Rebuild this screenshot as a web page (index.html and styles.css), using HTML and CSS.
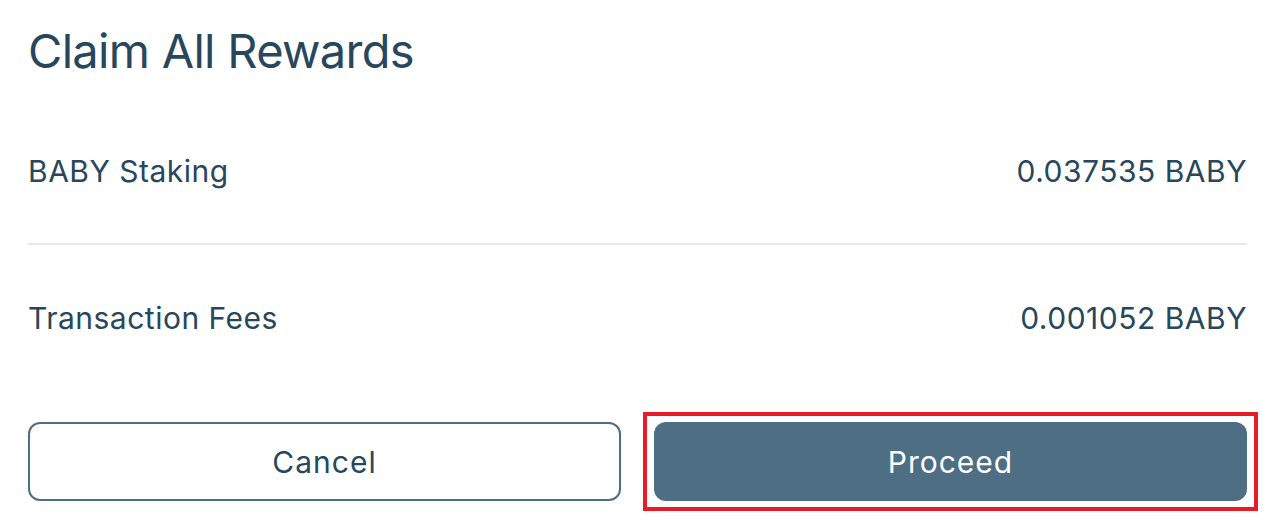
FILE: index.html
```html
<!DOCTYPE html>
<html lang="en">
<head>
    <meta charset="UTF-8">
    <meta name="viewport" content="width=device-width, initial-scale=1.0">
    <title>Claim All Rewards</title>
    <link rel="stylesheet" href="styles.css">
</head>
<body>
    <div class="dialog">
        <h1 class="dialog-title">Claim All Rewards</h1>

        <div class="reward-list">
            <div class="reward-row">
                <span class="reward-label">BABY Staking</span>
                <span class="reward-value">0.037535 BABY</span>
            </div>
            <div class="reward-row">
                <span class="reward-label">Transaction Fees</span>
                <span class="reward-value">0.001052 BABY</span>
            </div>
        </div>

        <div class="button-group">
            <button class="cancel-button">Cancel</button>
            <div class="highlighted">
                <button class="proceed-button">Proceed</button>
            </div>
        </div>
    </div>
</body>
</html>
```

FILE: styles.css
```css
body {
    font-family: Inter, "Liberation Sans", sans-serif;
    margin: 0;
    background-color: #ffffff;
    color: #28475c;
}
.dialog {
    padding: 0 38px 26px 28px;
}
.dialog-title {
    margin: 0;
    padding-top: 22px;
    font-size: 47px;
    font-weight: 400;
    line-height: 58px;
    letter-spacing: -0.7px;
}
.reward-list {
    margin-top: 18px;
}
.reward-row {
    display: flex;
    justify-content: space-between;
    align-items: center;
    height: 145px;
    font-size: 30px;
    letter-spacing: 0.5px;
}
.reward-row + .reward-row {
    border-top: 2px solid #e6e6eb;
}
.button-group {
    display: grid;
    grid-template-columns: 1fr 1fr;
    gap: 33px;
    margin-top: 32px;
}
button {
    font-family: inherit;
    font-size: 30px;
    letter-spacing: 1px;
    width: 100%;
    height: 79px;
    border-radius: 12px;
    cursor: pointer;
}
.cancel-button {
    background-color: #ffffff;
    color: #28475c;
    border: 2px solid #4e6e83;
}
.proceed-button {
    display: block;
    background-color: #4e6e83;
    color: #ffffff;
    border: none;
}
.highlighted {
    position: relative;
}
.highlighted::after {
    content: "";
    position: absolute;
    top: -10px;
    left: -11px;
    right: -11px;
    bottom: -10px;
    border: 4px solid #e81c27;
    pointer-events: none;
}
```
